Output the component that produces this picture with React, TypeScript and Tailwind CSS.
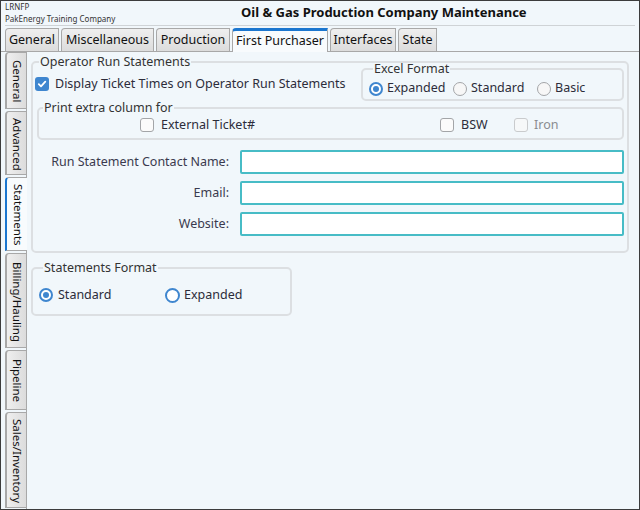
import React from "react";

const topTabs = [
  { label: "General", w: "w-[54px]" },
  { label: "Miscellaneous", w: "w-[93px]" },
  { label: "Production", w: "w-[74px]" },
  { label: "First Purchaser", w: "w-[96px]", active: true },
  { label: "Interfaces", w: "w-[66px]" },
  { label: "State", w: "w-[39px]" },
];

const sideTabs = [
  { label: "General", h: "h-[57px]" },
  { label: "Advanced", h: "h-[64px]" },
  { label: "Statements", h: "h-[74px]", active: true },
  { label: "Billing/Hauling", h: "h-[95px]" },
  { label: "Pipeline", h: "h-[60px]" },
  { label: "Sales/Inventory", h: "h-[96px]" },
];

const Check = ({ checked, disabled }: { checked?: boolean; disabled?: boolean }) =>
  checked ? (
    <span className="w-[14px] h-[14px] rounded-[3px] bg-[#3f86cf] flex items-center justify-center shrink-0">
      <svg width="10" height="10" viewBox="0 0 10 10">
        <path d="M1.8 5.2 L4 7.3 L8.3 2.6" fill="none" stroke="#fff" strokeWidth="1.8" strokeLinecap="round" strokeLinejoin="round" />
      </svg>
    </span>
  ) : (
    <span
      className={`w-[14px] h-[14px] rounded-[3px] border-[1.5px] shrink-0 ${
        disabled ? "border-[#c9cbcd] bg-[#f6f8f9]" : "border-[#a3a5a8] bg-[#fbfbfb]"
      }`}
    />
  );

const Radio = ({ checked, focus }: { checked?: boolean; focus?: boolean }) =>
  checked ? (
    <span className="w-[14px] h-[14px] rounded-full border-[2px] border-[#3f86cf] bg-white flex items-center justify-center shrink-0">
      <span className="w-[6px] h-[6px] rounded-full bg-[#3f86cf]" />
    </span>
  ) : focus ? (
    <span className="w-[15px] h-[15px] rounded-full border-[2.5px] border-[#3f86cf] bg-white shrink-0" />
  ) : (
    <span className="w-[14px] h-[14px] rounded-full border-[1.5px] border-[#a3a5a8] bg-[#f7f7f7] shrink-0" />
  );

const Group = ({
  title,
  className,
  children,
}: {
  title: string;
  className?: string;
  children: React.ReactNode;
}) => (
  <fieldset className={`border-2 border-[#dcdfe2] rounded-[5px] ${className ?? ""}`}>
    <legend className="ml-[4px] px-[1px] text-[12.5px] leading-[15px] text-[#333]">{title}</legend>
    {children}
  </fieldset>
);

export default function App() {
  return (
    <div className="w-[640px] h-[510px] border border-[#3c3c3c] bg-[#f1f7fb] flex flex-col overflow-hidden font-['Noto_Sans','Open_Sans',sans-serif] text-[#2c2c3a]">
      {/* header */}
      <div className="h-[25px] flex border-b border-[#cfd3d6] mx-[4px] shrink-0">
        <div className="w-[236px] flex flex-col text-[8px] leading-[12px] text-[#333]">
          <span>LRNFP</span>
          <span>PakEnergy Training Company</span>
        </div>
        <div className="font-bold text-[13px] text-[#111] leading-[23px]">
          Oil &amp; Gas Production Company Maintenance
        </div>
      </div>

      {/* top tabs */}
      <div className="h-[25px] flex items-end gap-[2px] px-[4px] border-b border-[#a8a8a8] shrink-0 mt-[1px]">
        {topTabs.map((t) =>
          t.active ? (
            <div
              key={t.label}
              className={`${t.w} h-[24px] -mb-px bg-[#f8fbfd] border border-[#a8a8a8] border-b-0 border-t-[3px] border-t-[#1b76cf] rounded-tl-[4px] text-[12.5px] text-[#111] flex items-center justify-center pb-[1px]`}
            >
              {t.label}
            </div>
          ) : (
            <div
              key={t.label}
              className={`${t.w} h-[23px] bg-gradient-to-b from-[#efefef] to-[#dcdcdc] border border-[#a8a8a8] border-b-0 rounded-tl-[4px] text-[12.5px] text-[#111] flex items-center justify-center`}
            >
              {t.label}
            </div>
          )
        )}
      </div>

      {/* body */}
      <div className="flex flex-1 min-h-0">
        <div className="w-[26px] pl-[4px] border-r border-[#a8a8a8] flex flex-col gap-[2px] shrink-0">
          {sideTabs.map((t) => (
            <div
              key={t.label}
              className={`${t.h} border border-l-[2px] border-r-0 border-[#a8a8a8] rounded-tl-[4px] flex justify-center pt-[2px] text-[11.5px] leading-[18px] text-[#111] whitespace-nowrap overflow-hidden [writing-mode:vertical-rl] ${
                t.active
                  ? "bg-[#f8fbfd] border-l-[#1b76cf] -mr-px"
                  : "bg-gradient-to-r from-[#efefef] to-[#dcdcdc]"
              }`}
            >
              {t.label}
            </div>
          ))}
        </div>

        <div className="flex-1 pl-[4px] pr-[10px] pt-[2px]">
          <Group title="Operator Run Statements" className="pl-[2px] pr-[3px] pb-[15px]">
            <div className="flex items-start">
              <label className="flex items-center gap-[6px] text-[12.5px] mt-[6px]">
                <Check checked />
                <span>Display Ticket Times on Operator Run Statements</span>
              </label>
              <Group title="Excel Format" className="ml-auto w-[263px] -mt-[8px] pl-[6px] pb-[1px]">
                <div className="flex items-center text-[12.5px] h-[19px] mt-[3px]">
                  <label className="flex items-center gap-[4px] w-[84px]">
                    <Radio checked />
                    <span>Expanded</span>
                  </label>
                  <label className="flex items-center gap-[4px] w-[84px]">
                    <Radio />
                    <span>Standard</span>
                  </label>
                  <label className="flex items-center gap-[4px]">
                    <Radio />
                    <span>Basic</span>
                  </label>
                </div>
              </Group>
            </div>

            <Group title="Print extra column for" className="ml-[2px] -mt-[1px] pb-[3px]">
              <div className="flex items-center text-[12.5px] h-[20px]">
                <label className="flex items-center gap-[7px] ml-[101px] w-[300px]">
                  <Check />
                  <span>External Ticket#</span>
                </label>
                <label className="flex items-center gap-[7px] w-[74px]">
                  <Check />
                  <span>BSW</span>
                </label>
                <label className="flex items-center gap-[6px] text-[#8a8c90]">
                  <Check disabled />
                  <span>Iron</span>
                </label>
              </div>
            </Group>

            <div className="grid grid-cols-[194px_1fr] gap-x-[11px] gap-y-[7px] mt-[10px] items-center text-[12.5px] text-[#3a3a4e]">
              <span className="text-right">Run Statement Contact Name:</span>
              <div className="h-[24px] bg-white border-2 border-[#47bcc6] rounded-[2px]" />
              <span className="text-right">Email:</span>
              <div className="h-[24px] bg-white border-2 border-[#47bcc6] rounded-[2px]" />
              <span className="text-right">Website:</span>
              <div className="h-[24px] bg-white border-2 border-[#47bcc6] rounded-[2px]" />
            </div>
          </Group>

          <Group title="Statements Format" className="w-[261px] mt-[7px] pl-[6px] pb-[7px]">
            <div className="flex items-center text-[12.5px] h-[24px] mt-[8px]">
              <label className="flex items-center gap-[5px] w-[126px]">
                <Radio checked />
                <span>Standard</span>
              </label>
              <label className="flex items-center gap-[4px]">
                <Radio focus />
                <span>Expanded</span>
              </label>
            </div>
          </Group>
        </div>
      </div>
    </div>
  );
}
